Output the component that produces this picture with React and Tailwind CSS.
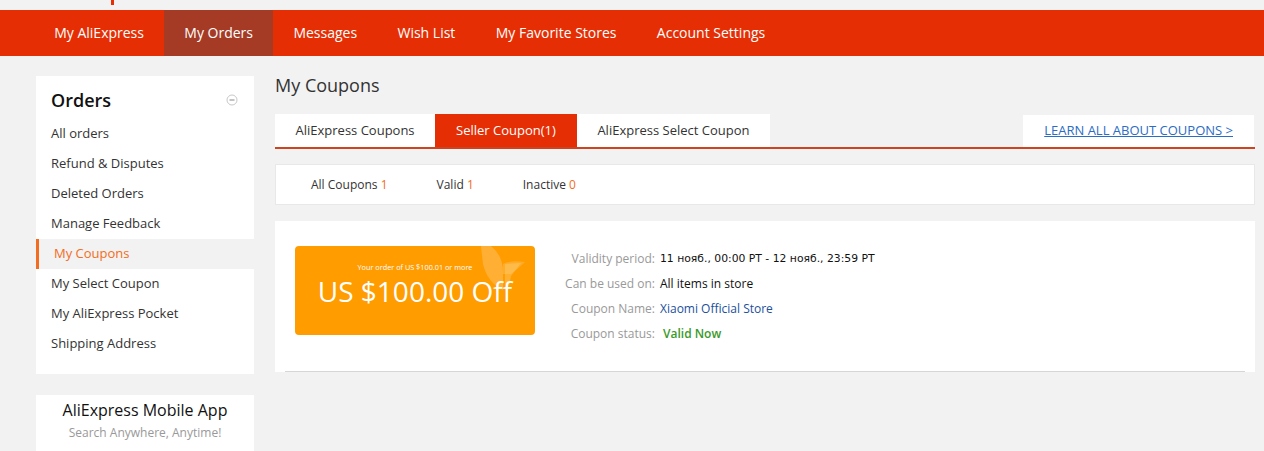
import React from "react";

const navItems = [
  "My AliExpress",
  "My Orders",
  "Messages",
  "Wish List",
  "My Favorite Stores",
  "Account Settings",
];

const sideItems = [
  "All orders",
  "Refund & Disputes",
  "Deleted Orders",
  "Manage Feedback",
  "My Coupons",
  "My Select Coupon",
  "My AliExpress Pocket",
  "Shipping Address",
];

const tabs = ["AliExpress Coupons", "Seller Coupon(1)", "AliExpress Select Coupon"];

function CollapseIcon() {
  return (
    <svg width="12" height="12" viewBox="0 0 12 12" className="block">
      <circle cx="6" cy="6" r="5" fill="none" stroke="#c8c8c8" strokeWidth="1" />
      <line x1="3.5" y1="6" x2="8.5" y2="6" stroke="#9a9a9a" strokeWidth="1.2" />
    </svg>
  );
}

function CouponArt() {
  return (
    <svg
      width="50"
      height="46"
      viewBox="0 0 50 46"
      className="absolute right-[4px] top-0"
    >
      <path d="M0 0 L10 0 Q22 10 22 26 L22 44 Q6 36 2 18 Z" fill="#ffffff" fillOpacity="0.2" />
      <path d="M22 18 Q30 14 44 16 Q38 22 30 28 L22 28 Z" fill="#ffffff" fillOpacity="0.16" />
      <path d="M24 18 L40 17 L30 30 L28 40 L24 38 Z" fill="#ffd88a" fillOpacity="0.35" />
    </svg>
  );
}

function DetailRow({ label, children }) {
  return (
    <div className="flex h-[25px] items-center">
      <span className="w-[95px] text-right text-[#999]">{label}</span>
      <span className="ml-[5px]">{children}</span>
    </div>
  );
}

export default function App() {
  return (
    <div
      className="min-h-screen bg-[#f2f2f2] text-[#333]"
      style={{ fontFamily: '"Open Sans", "Noto Sans", sans-serif' }}
    >
      {/* header strip with the edge of the logo */}
      <div className="h-[10px] pl-[111px]">
        <div className="h-[5px] w-[3px] bg-[#e62e04]" />
      </div>

      {/* main navigation */}
      <nav className="flex h-[46px] bg-[#e62e04] pl-[34px] text-[14px] text-white">
        {navItems.map((item) => (
          <a
            key={item}
            className={
              "flex items-center px-[20.2px] pb-[2px] " +
              (item === "My Orders" ? "bg-[#a53b24]" : "")
            }
          >
            {item}
          </a>
        ))}
      </nav>

      <div className="flex pl-[36px] pt-[20px]">
        {/* sidebar */}
        <aside className="w-[218px] shrink-0">
          <div className="bg-white pb-[15px]">
            <div className="flex items-center justify-between pl-[15px] pr-[16px] pt-[12px] pb-[7px]">
              <h2 className="text-[18px] font-semibold leading-[24px] text-[#111]">Orders</h2>
              <CollapseIcon />
            </div>
            <ul className="text-[13px]">
              {sideItems.map((item) =>
                item === "My Coupons" ? (
                  <li
                    key={item}
                    className="flex h-[30px] items-center border-l-[3px] border-[#f36d21] bg-[#f2f2f2] pl-[15px] text-[#f36d21]"
                  >
                    {item}
                  </li>
                ) : (
                  <li key={item} className="flex h-[30px] items-center pl-[15px] text-[#333]">
                    {item}
                  </li>
                )
              )}
            </ul>
          </div>

          <div className="mt-[21px] bg-white pt-[4px] pb-[10px] text-center">
            <div className="text-[16px] leading-[22px] text-[#111]">AliExpress Mobile App</div>
            <div className="mt-[1px] text-[12px] leading-[22px] text-[#999]">
              Search Anywhere, Anytime!
            </div>
          </div>
        </aside>

        {/* coupons content */}
        <main className="ml-[21px] w-[980px]">
          <h1 className="-mt-[3px] text-[18px] leading-[24px] text-[#333]">My Coupons</h1>

          <div className="mt-[17px] flex items-end justify-between border-b-2 border-[#cf4420]">
            <div className="flex h-[33px] text-[13px]">
              {tabs.map((t) =>
                t === "Seller Coupon(1)" ? (
                  <div key={t} className="flex items-center bg-[#e62e04] px-[21px] text-white">
                    {t}
                  </div>
                ) : (
                  <div key={t} className="flex items-center bg-white px-[20.5px] text-[#333]">
                    {t}
                  </div>
                )
              )}
            </div>
            <div className="mr-px flex h-[32px] items-center bg-white px-[21px] text-[13px]">
              <a className="text-[#2b6cc4] underline">LEARN ALL ABOUT COUPONS &gt;</a>
            </div>
          </div>

          <div className="mt-[15px] flex h-[41px] items-center gap-[49px] border border-[#e8e8e8] bg-white pl-[35px] text-[12px] text-[#333]">
            <span>
              All Coupons <span className="text-[#f36d21]">1</span>
            </span>
            <span>
              Valid <span className="text-[#f36d21]">1</span>
            </span>
            <span>
              Inactive <span className="text-[#f36d21]">0</span>
            </span>
          </div>

          <div className="mt-[16px] bg-white px-[10px] pt-[25px]">
            <div className="flex border-b border-[#d6d6d6] pb-[25px] pl-[10px]">
              <div className="relative flex h-[89px] w-[240px] shrink-0 flex-col items-center overflow-hidden rounded-[4px] bg-[#ff9c00] text-white">
                <CouponArt />
                <div className="relative mt-[17px] text-[7.3px] leading-[9px]">
                  Your order of US $100.01 or more
                </div>
                <div className="relative mt-[1px] text-[28px] leading-[36px]">US $100.00 Off</div>
              </div>

              <div className="ml-[25px] text-[12px]">
                <DetailRow label="Validity period:">
                  <span
                    className="text-[#111]"
                    style={{ fontFamily: '"DejaVu Sans", "Liberation Sans", sans-serif', fontSize: "10.8px" }}
                  >
                    11 нояб., 00:00 PT - 12 нояб., 23:59 PT
                  </span>
                </DetailRow>
                <DetailRow label="Can be used on:">
                  <span className="text-[#111]">All items in store</span>
                </DetailRow>
                <DetailRow label="Coupon Name:">
                  <span className="text-[#21509c]">Xiaomi Official Store</span>
                </DetailRow>
                <DetailRow label="Coupon status:">
                  <span className="ml-[3px] font-semibold text-[#3a9a2a]">Valid Now</span>
                </DetailRow>
              </div>
            </div>
          </div>
        </main>
      </div>
    </div>
  );
}
